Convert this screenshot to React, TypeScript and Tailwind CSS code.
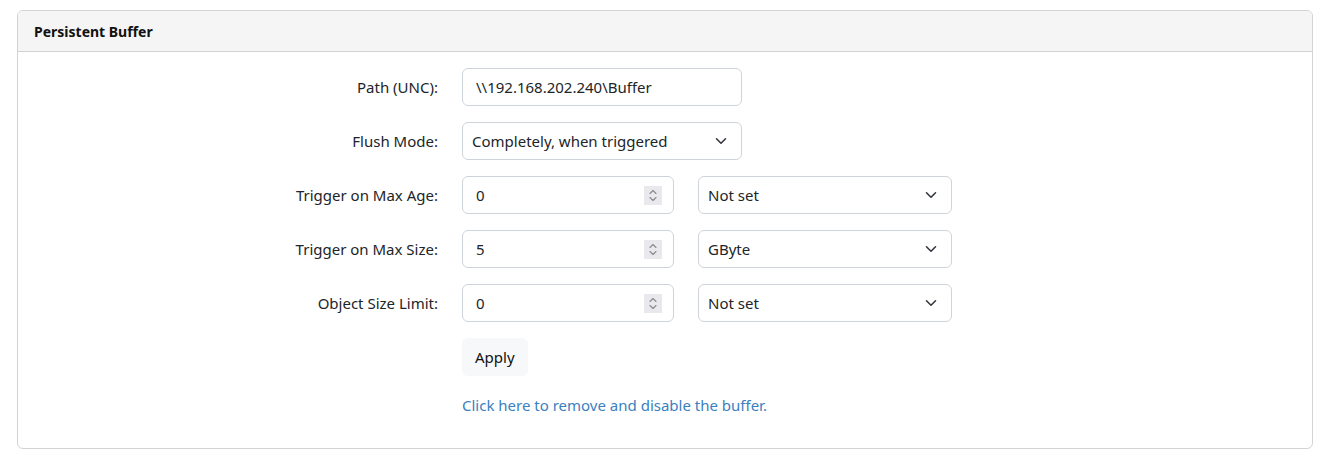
import React from "react";

const font = { fontFamily: '"Noto Sans", "Open Sans", "Liberation Sans", sans-serif' };

function Chevron() {
  return (
    <svg width="12" height="8" viewBox="0 0 12 8" fill="none" className="shrink-0">
      <path d="M1.5 1.75 L6 6.25 L10.5 1.75" stroke="#343a40" strokeWidth="1.6" strokeLinecap="round" strokeLinejoin="round" />
    </svg>
  );
}

function Spinner() {
  return (
    <div className="w-[18px] h-[19px] bg-[#e9e9ed] flex items-center justify-center">
      <svg width="10" height="15" viewBox="0 0 10 15" fill="none">
        <path d="M2 5.5 L5 2.5 L8 5.5" stroke="#8a8a8a" strokeWidth="1.1" strokeLinecap="round" strokeLinejoin="round" />
        <path d="M2 9.5 L5 12.5 L8 9.5" stroke="#8a8a8a" strokeWidth="1.1" strokeLinecap="round" strokeLinejoin="round" />
      </svg>
    </div>
  );
}

function Label({ children }: { children: React.ReactNode }) {
  return <div className="w-[404px] shrink-0 text-right text-[15px] text-[#212529]">{children}</div>;
}

function TextBox({ value, width }: { value: string; width: string }) {
  return (
    <div className={`${width} h-[38px] border border-[#ced4da] rounded-[6px] bg-white flex items-center pl-[13px] text-[15px] text-[#212529]`}>
      {value}
    </div>
  );
}

function SelectBox({ value, wide }: { value: string; wide?: boolean }) {
  return (
    <div
      className={`${wide ? "w-[280px]" : "w-[254px]"} h-[38px] border border-[#ced4da] rounded-[6px] bg-white flex items-center justify-between pl-[9px] pr-[14px] text-[15px] text-[#212529]`}
    >
      <span>{value}</span>
      <Chevron />
    </div>
  );
}

function NumberBox({ value }: { value: string }) {
  return (
    <div className="w-[212px] h-[38px] border border-[#ced4da] rounded-[6px] bg-white flex items-center justify-between pl-[13px] pr-[11px] text-[15px] text-[#212529]">
      <span>{value}</span>
      <Spinner />
    </div>
  );
}

function Row({ label, children }: { label: string; children: React.ReactNode }) {
  return (
    <div className="flex items-center gap-6">
      <Label>{label}</Label>
      <div className="flex items-center gap-6">{children}</div>
    </div>
  );
}

export default function App() {
  return (
    <div className="bg-white min-h-[463px] pt-[10px] pl-[17px] pr-[22px]" style={font}>
      <div className="border border-[#d3d3d3] rounded-[6px] overflow-hidden">
        <div className="h-[41px] bg-[#f5f5f5] border-b border-[#d3d3d3] flex items-center px-4 text-[14px] font-bold text-[#111]">
          Persistent Buffer
        </div>
        <div className="px-4 pt-4 pb-[31px] flex flex-col gap-4">
          <Row label="Path (UNC):">
            <TextBox value="\\192.168.202.240\Buffer" width="w-[280px]" />
          </Row>
          <Row label="Flush Mode:">
            <SelectBox value="Completely, when triggered" wide />
          </Row>
          <Row label="Trigger on Max Age:">
            <NumberBox value="0" />
            <SelectBox value="Not set" />
          </Row>
          <Row label="Trigger on Max Size:">
            <NumberBox value="5" />
            <SelectBox value="GByte" />
          </Row>
          <Row label="Object Size Limit:">
            <NumberBox value="0" />
            <SelectBox value="Not set" />
          </Row>
          <div className="flex gap-6">
            <div className="w-[404px] shrink-0" />
            <div className="flex flex-col items-start gap-[18px]">
              <button className="h-[38px] px-[13px] rounded-[6px] bg-[#f7f8f9] text-[15px] text-[#111]">Apply</button>
              <a className="text-[15px] text-[#3a7fc0] cursor-pointer">Click here to remove and disable the buffer.</a>
            </div>
          </div>
        </div>
      </div>
    </div>
  );
}
